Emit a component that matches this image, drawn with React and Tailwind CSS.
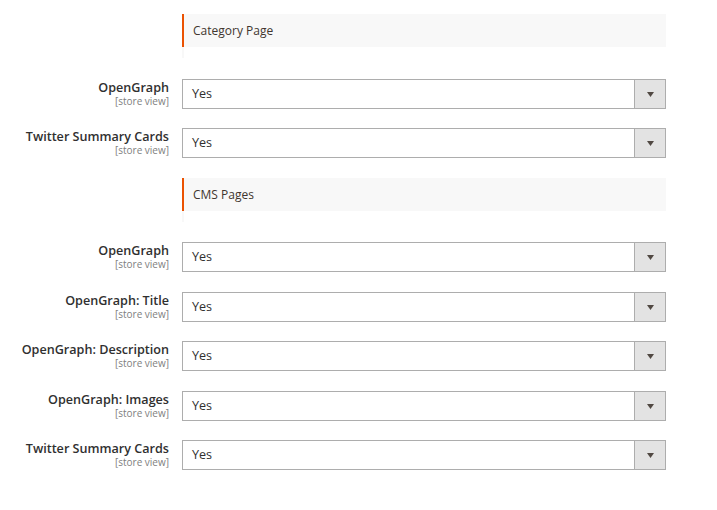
import React from "react";

function Header({ title }) {
  return (
    <div>
      <div className="flex">
        <div className="w-[182px] shrink-0" />
        <div className="w-[484px] h-[33px] border-l-[2px] border-[#eb5202] bg-[#f8f8f8] pl-[9px] flex items-center text-[12px] text-[#41362f]">
          {title}
        </div>
      </div>
      <div className="flex">
        <div className="w-[182px] shrink-0" />
        <div className="w-[2px] h-[11px] bg-[#f8f8f8]" />
      </div>
    </div>
  );
}

function Row({ label, className = "" }) {
  return (
    <div className={"flex items-start " + className}>
      <div className="w-[169px] shrink-0 text-right pt-[2px]">
        <div className="text-[12.6px] font-semibold text-[#303030] leading-[14px]">{label}</div>
        <div className="text-[10px] text-[#808080] leading-[12px]">[store view]</div>
      </div>
      <div className="ml-[13px] w-[484px] h-[30px] border border-[#adadad] bg-white flex items-stretch">
        <div className="flex-1 flex items-center pl-[9px] text-[12.6px] text-[#303030]">Yes</div>
        <div className="w-[31px] bg-[#e3e3e3] border-l border-[#adadad] flex items-center justify-center">
          <svg width="7" height="5" viewBox="0 0 7 5">
            <path d="M0 0 H7 L3.5 5 Z" fill="#514943" />
          </svg>
        </div>
      </div>
    </div>
  );
}

export default function App() {
  return (
    <div
      className="w-[717px] h-[510px] bg-white pt-[14px] overflow-hidden"
      style={{ fontFamily: '"Open Sans", "Liberation Sans", sans-serif' }}
    >
      <Header title="Category Page" />
      <div className="mt-[21px] flex flex-col">
        <Row label="OpenGraph" />
        <Row label="Twitter Summary Cards" className="mt-[19px]" />
      </div>
      <div className="mt-[20px]">
        <Header title="CMS Pages" />
      </div>
      <div className="mt-[20px] flex flex-col">
        <Row label="OpenGraph" />
        <Row label="OpenGraph: Title" className="mt-[20px]" />
        <Row label="OpenGraph: Description" className="mt-[19px]" />
        <Row label="OpenGraph: Images" className="mt-[20px]" />
        <Row label="Twitter Summary Cards" className="mt-[19px]" />
      </div>
    </div>
  );
}
